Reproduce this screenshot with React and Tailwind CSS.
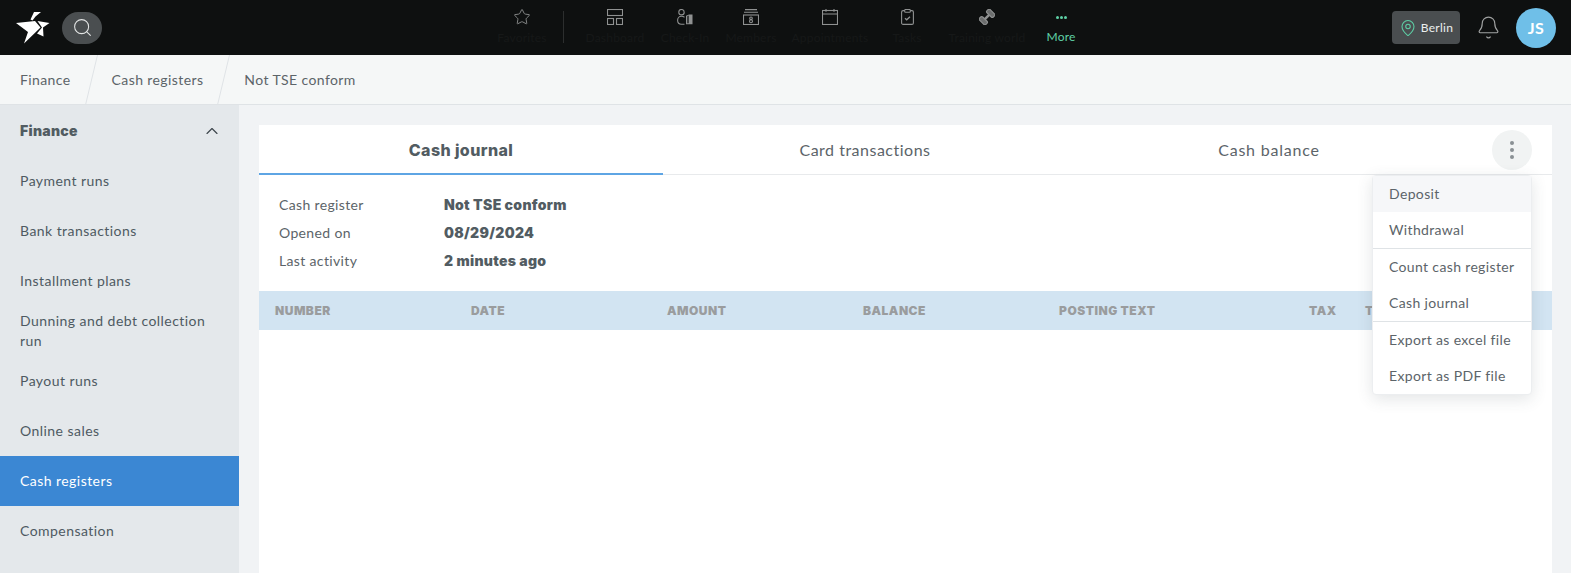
import { Search, ChevronUp, MapPin, Bell, Star } from "lucide-react";

const navItems = [
  { label: "Dashboard", width: "w-[76px]", icon: <DashboardIcon /> },
  { label: "Check-In", width: "w-[64px]", icon: <CheckInIcon /> },
  { label: "Members", width: "w-[68px]", icon: <MembersIcon /> },
  { label: "Appointments", width: "w-[90px]", icon: <CalendarIcon /> },
  { label: "Tasks", width: "w-[64px]", icon: <TasksIcon /> },
  { label: "Training world", width: "w-[96px]", icon: <DumbbellIcon /> },
];

const sideItems = [
  { label: "Payment runs" },
  { label: "Bank transactions" },
  { label: "Installment plans" },
  { label: "Dunning and debt collection run" },
  { label: "Payout runs" },
  { label: "Online sales" },
  { label: "Cash registers", active: true },
  { label: "Compensation" },
];

const columns = [
  { label: "NUMBER", width: "w-[196px]" },
  { label: "DATE", width: "w-[196px]" },
  { label: "AMOUNT", width: "w-[196px]" },
  { label: "BALANCE", width: "w-[196px]" },
  { label: "POSTING TEXT", width: "w-[250px]" },
  { label: "TAX", width: "w-[56px]" },
  { label: "TYPE", width: "w-[60px]" },
];

const menuGroups = [
  ["Deposit", "Withdrawal"],
  ["Count cash register", "Cash journal"],
  ["Export as excel file", "Export as PDF file"],
];

function DashboardIcon() {
  return (
    <svg width="16" height="16" viewBox="0 0 16 16" fill="none" stroke="#8f9191" strokeWidth="1.1">
      <rect x="0.5" y="0.5" width="15" height="6" />
      <rect x="0.5" y="9.5" width="6" height="6" />
      <rect x="9.5" y="9.5" width="6" height="6" />
    </svg>
  );
}

function CheckInIcon() {
  return (
    <svg width="16" height="16" viewBox="0 0 16 16" fill="none" stroke="#8f9191" strokeWidth="1.1">
      <circle cx="4.500" cy="3.200" r="2.700" />
      <path d="M7.500 8.200C6.700 7.600 5.700 7.300 4.500 7.300 2.300 7.300 .6 8.900 .6 11.200 .6 13.600 2.300 15.200 4.500 15.200H7.500" />
      <path d="M9 6.700 12 5.500H15.500V15.200H9Z" fill="#8f9191" stroke="none" />
      <path d="M10 7.200 12 6.400V14.300H10Z" fill="#3a3c3c" stroke="none" />
    </svg>
  );
}

function MembersIcon() {
  return (
    <svg width="16" height="16" viewBox="0 0 16 16" fill="none" stroke="#8f9191" strokeWidth="1.1">
      <path d="M2 .6H14M1 3.200H15" />
      <rect x="0.500" y="6" width="15" height="9.500" />
      <circle cx="8" cy="9.300" r="1.300" />
      <circle cx="8" cy="12.200" r="1.500" />
    </svg>
  );
}

function CalendarIcon() {
  return (
    <svg width="16" height="16" viewBox="0 0 16 16" fill="none" stroke="#8f9191" strokeWidth="1.1">
      <rect x="0.500" y="1.500" width="15" height="14" />
      <path d="M.5 5H15.500M4 0V2.800M12 0V2.800" />
    </svg>
  );
}

function TasksIcon() {
  return (
    <svg width="13" height="16" viewBox="0 0 13 16" fill="none" stroke="#8f9191" strokeWidth="1.1">
      <rect x="0.600" y="1.600" width="11.800" height="13.800" rx="1.500" />
      <rect x="3.700" y="0.500" width="5.600" height="2.800" rx="0.800" fill="#0e1010" />
      <path d="M4 9.300 5.700 10.800 9 7.800" strokeWidth="1.300" />
    </svg>
  );
}

function DumbbellIcon() {
  return (
    <svg width="16" height="16" viewBox="0 0 16 16" fill="none" stroke="#8f9191" strokeWidth="1.1">
      <g transform="rotate(-45 8 8)">
        <rect x="0.500" y="3.500" width="4.500" height="9" rx="1.500" fill="#6c6e6e" />
        <path d="M5 8H11" strokeWidth="2.400" />
        <rect x="11" y="3.500" width="4.500" height="9" rx="1.500" fill="#6c6e6e" />
      </g>
    </svg>
  );
}

function Logo() {
  return (
    <svg width="34" height="33" viewBox="0 0 34 33" fill="white">
      <path d="M0 12 19 10 24.500 16.500 8 32.500 12 21Z" />
      <path d="M14.500 8.500 18 1H25L19.500 5.500 16.500 9.500Z" />
      <path d="M21.500 10 33.500 12 27 16.500 27.500 25.500 21 22.500 26 16.500Z" />
    </svg>
  );
}

function TopBar() {
  return (
    <header className="h-[55px] bg-[#0e1010] flex items-center shrink-0">
      <div className="w-[102px] flex items-center pl-4 gap-[12px] shrink-0">
        <Logo />
        <button className="w-10 h-8 rounded-full bg-[#4a4e50] flex items-center justify-center">
          <Search size={21} strokeWidth={1.2} color="#e3e5e5" />
        </button>
      </div>
      <nav className="ml-[379px] flex items-start h-full pt-[9px]">
        <NavCell label="Favorites" width="w-[82px]" icon={<Star size={18} strokeWidth={1.2} color="#8f9191" />} />
        <div className="w-px h-8 bg-[#2c2e2e] mt-[2px] mr-[13px]"></div>
        {navItems.map((item) => (
          <NavCell key={item.label} {...item} />
        ))}
        <div className="w-[52px] flex flex-col items-center">
          <div className="h-4 flex items-center gap-[1px]">
            <span className="w-[3px] h-[3px] rounded-full bg-[#5ed0a6]"></span>
            <span className="w-[3px] h-[3px] rounded-full bg-[#5ed0a6]"></span>
            <span className="w-[3px] h-[3px] rounded-full bg-[#5ed0a6]"></span>
          </div>
          <span className="text-xs leading-4 mt-[4px] text-[#5ed0a6] whitespace-nowrap tracking-[0.2px]">More</span>
        </div>
      </nav>
      <div className="ml-auto flex items-center pr-[15px]">
        <div className="h-[33px] w-[68px] rounded bg-[#4a4e50] flex items-center justify-center gap-[4px]">
          <MapPin size={18} strokeWidth={1.4} color="#5ed0a6" />
          <span className="text-xs text-[#eceeee] tracking-[0.3px]">Berlin</span>
        </div>
        <Bell size={25} strokeWidth={1.1} color="#a0a2a2" className="ml-[16px]" />
        <div className="ml-[15px] w-10 h-10 rounded-full bg-[#6fbfe8] flex items-center justify-center text-white font-bold text-base tracking-[0.5px]">
          JS
        </div>
      </div>
    </header>
  );
}

function NavCell({ label, width, icon }) {
  return (
    <div className={`${width} flex flex-col items-center`}>
      <div className="h-4 flex items-center justify-center">{icon}</div>
      <span className="text-xs leading-4 mt-[5px] text-[#161818] whitespace-nowrap tracking-[0.2px]">{label}</span>
    </div>
  );
}

function Separator() {
  return (
    <svg width="13" height="50" viewBox="0 0 13 50" className="mx-[14px]">
      <path d="M12.500 0 .5 50" stroke="#dfe3e6" fill="none" />
    </svg>
  );
}

function Breadcrumbs() {
  return (
    <div className="h-[50px] bg-[#f5f7f7] border-b border-[#dfe3e6] flex items-center text-sm text-[#5c6469] tracking-[0.4px] shrink-0">
      <span className="pl-5">Finance</span>
      <Separator />
      <span>Cash registers</span>
      <Separator />
      <span>Not TSE conform</span>
    </div>
  );
}

function Sidebar() {
  return (
    <aside className="w-[239px] shrink-0 bg-[#e4e8eb] text-sm text-[#4e5a62] tracking-[0.45px]">
      <div className="h-[51px] pl-5 pr-[17px] flex items-center justify-between">
        <span className="font-black font-['Inter'] tracking-[0.3px] text-[#525c62]">Finance</span>
        <ChevronUp size={20} strokeWidth={1.4} color="#3e474d" />
      </div>
      {sideItems.map((item) => (
        <div
          key={item.label}
          className={`h-[50px] pl-5 pr-[24px] flex items-center leading-5 ${
            item.active ? "bg-[#3b87d3] text-white" : ""
          }`}
        >
          {item.label}
        </div>
      ))}
    </aside>
  );
}

function Tabs() {
  return (
    <div className="relative flex h-[50px] border-b border-[#e8eaec]">
      <div className="w-[404px] flex items-center justify-center pt-[2px] font-extrabold font-['Inter'] text-base tracking-[0.4px] text-[#525c62] border-b-2 border-[#5ea5e4] h-[50px]">
        Cash journal
      </div>
      <div className="w-[404px] flex items-center justify-center text-base text-[#5c6469] tracking-[0.5px]">Card transactions</div>
      <div className="w-[404px] flex items-center justify-center text-base text-[#5c6469] tracking-[0.8px]">Cash balance</div>
      <button className="absolute right-[20px] top-[5px] w-10 h-10 rounded-full bg-[#f1f3f3] flex flex-col items-center justify-center gap-[3px]">
        <span className="w-1 h-1 rounded-full bg-[#8a9094]"></span>
        <span className="w-1 h-1 rounded-full bg-[#8a9094]"></span>
        <span className="w-1 h-1 rounded-full bg-[#8a9094]"></span>
      </button>
    </div>
  );
}

function InfoRow({ label, value }) {
  return (
    <div className="flex h-7 items-center text-sm">
      <span className="w-[165px] text-[#5c6469] tracking-[0.35px]">{label}</span>
      <span className="font-black font-['Inter'] tracking-[0.3px] text-[#525c62]">{value}</span>
    </div>
  );
}

function Menu() {
  return (
    <div className="absolute right-[20px] top-[50px] w-[160px] bg-white rounded-sm border border-[#eceef0] shadow-[0_4px_16px_rgba(60,70,80,0.14)] text-sm text-[#5c6469] tracking-[0.35px] z-10">
      {menuGroups.map((group, i) => (
        <div key={i} className={i > 0 ? "border-t border-[#dfe3e6]" : ""}>
          {group.map((entry) => (
            <div
              key={entry}
              className={`h-9 pl-4 flex items-center whitespace-nowrap ${entry === "Deposit" ? "bg-[#f6f7f9]" : ""}`}
            >
              {entry}
            </div>
          ))}
        </div>
      ))}
    </div>
  );
}

export default function App() {
  return (
    <div className="h-[573px] overflow-hidden flex flex-col bg-[#f1f3f5] font-['Lato','Noto_Sans',sans-serif]">
      <TopBar />
      <Breadcrumbs />
      <div className="flex flex-1 min-h-0">
        <Sidebar />
        <main className="flex-1 pt-5 pl-5 pr-[19px] min-w-0">
          <div className="relative bg-white h-full">
            <Tabs />
            <div className="pt-4 pl-5 pb-[16px]">
              <InfoRow label="Cash register" value="Not TSE conform" />
              <InfoRow label="Opened on" value="08/29/2024" />
              <InfoRow label="Last activity" value="2 minutes ago" />
            </div>
            <div className="h-[39px] bg-[#d2e4f2] flex items-center pl-[16px] overflow-hidden">
              {columns.map((col) => (
                <span key={col.label} className={`${col.width} shrink-0 text-xs font-black font-['Inter'] tracking-[0.5px] text-[#9a9c9e]`}>
                  {col.label}
                </span>
              ))}
            </div>
            <Menu />
          </div>
        </main>
      </div>
    </div>
  );
}
